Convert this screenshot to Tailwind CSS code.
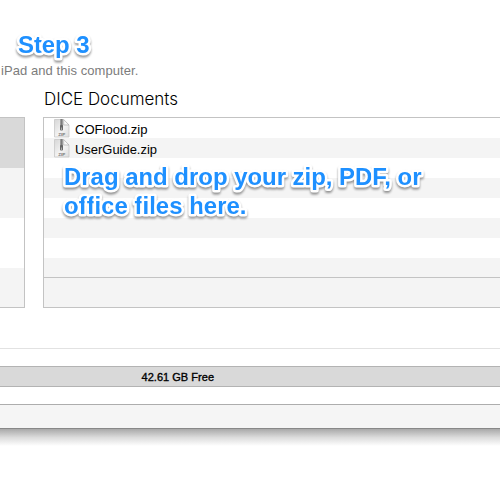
<!DOCTYPE html>
<html lang="en"><head><meta charset="utf-8"><title>File sharing</title>
<script src="https://cdn.jsdelivr.net/npm/@tailwindcss/browser@4"></script></head>
<body class="relative w-[500px] h-[500px] overflow-hidden bg-white font-['Liberation_Sans',Arial,sans-serif] text-black">
<svg width="0" height="0" class="absolute"><defs>
<linearGradient id="pg" x1="0" x2="1" y1="0" y2="1"><stop offset="0" stop-color="#d6d6d6"/><stop offset=".55" stop-color="#f3f3f3"/><stop offset="1" stop-color="#dcdcdc"/></linearGradient>
<symbol id="zip" viewBox="0 0 16 20">
<path d="M.5 1.500H9.500L15 7V19H.5Z" fill="url(#pg)" stroke="#c8c8c8" stroke-width=".8"/>
<path d="M9.700 1.500V7H15Z" fill="#fafafa" stroke="#b0b0b0" stroke-width=".7"/>
<path d="M7.500 1V8" stroke="#a5a5a5" stroke-width="3"/><path d="M7.500 1V8" stroke="#7c7c7c" stroke-width="1.500"/>
<rect x="6" y="7" width="3" height="5.500" rx="1" fill="#666"/><path d="M7.500 9.500V12" stroke="#bbb" stroke-width=".8"/>
<text x="4.300" y="18.200" font-size="4" font-weight="bold" fill="#777" textLength="7" lengthAdjust="spacingAndGlyphs">ZIP</text>
</symbol></defs></svg>
<main class="flex flex-col h-[429px] bg-white border-b border-[#888]">
  <header class="h-[117px] shrink-0 pt-[62px]">
    <p class="h-4 pl-px text-[13px] leading-4 text-[#808080] whitespace-nowrap"><svg class="block overflow-visible" width="140" height="16"><text x="0" y="13" font-size="13" fill="#7c7c7c" textLength="137.300">iPad and this computer.</text></svg></p>
    <h1 class="pl-11 pt-2.5 h-[39px]"><svg class="block overflow-visible" width="140" height="22"><text x="0" y="17" font-size="17.500" font-family="Inter" font-weight="300" textLength="134" lengthAdjust="spacingAndGlyphs">DICE Documents</text></svg></h1>
  </header>
  <section class="flex h-[191px] shrink-0 gap-[18px]">
    <div class="flex flex-col w-[25px] shrink-0 border border-l-0 border-[#c3c3c3]">
      <div class="h-[50px] bg-[#d9d9d9]"></div><div class="h-[50px] bg-[#f4f4f4]"></div><div class="h-[50px]"></div><div class="flex-1 bg-[#f4f4f4]"></div>
    </div>
    <div class="flex flex-col flex-1 border border-r-0 border-[#c3c3c3]">
      <div class="flex h-5 pl-2.5"><svg width="16" height="20"><use href="#zip"/></svg><svg class="ml-[5px] overflow-visible" width="90" height="20"><text y="16" font-size="13.300" textLength="72.500" lengthAdjust="spacingAndGlyphs">COFlood.zip</text></svg></div>
      <div class="flex h-5 pl-2.5 bg-[#f4f4f4]"><svg width="16" height="20"><use href="#zip"/></svg><svg class="ml-[5px] overflow-visible" width="90" height="20"><text y="16" font-size="13.300" textLength="82" lengthAdjust="spacingAndGlyphs">UserGuide.zip</text></svg></div>
      <div class="h-5"></div><div class="h-5 bg-[#f4f4f4]"></div><div class="h-5"></div><div class="h-5 bg-[#f4f4f4]"></div><div class="h-5"></div><div class="h-[19px] bg-[#f4f4f4]"></div>
      <div class="flex-1 border-t border-[#c3c3c3] bg-[#f4f4f4]"></div>
    </div>
  </section>
  <div class="h-[41px] shrink-0 border-b border-[#e2e2e2]"></div>
  <div class="mt-[17px] h-[21px] shrink-0 border-y border-[#b3b3b3] bg-[#d9d9d9] pl-[142px]"><svg class="block overflow-visible" width="80" height="19"><text x="-.5" y="14" font-size="11" stroke="#000" stroke-width=".35" textLength="72.500">42.61 GB Free</text></svg></div>
  <footer class="mt-[17px] flex-1 border-t border-[#adadad] bg-[#f5f5f5]"></footer>
</main>
<div class="h-[17px] bg-linear-to-b from-[#a9a9a9] via-[#dcdcdc] to-white"></div>
<!-- Callouts over the window -->
<svg class="absolute inset-0 [filter:drop-shadow(0_2px_1px_rgb(0_0_0/.4))]" width="500" height="500">
<g font-size="24" font-weight="bold" fill="#1e90ff" stroke="#fff" stroke-width="5" stroke-linejoin="round" paint-order="stroke">
<text x="18" y="53" textLength="71.500">Step 3</text>
<text x="64" y="185" textLength="357.500">Drag and drop your zip, PDF, or</text>
<text x="64" y="214" textLength="182.500">office files here.</text>
</g></svg>
</body></html>
